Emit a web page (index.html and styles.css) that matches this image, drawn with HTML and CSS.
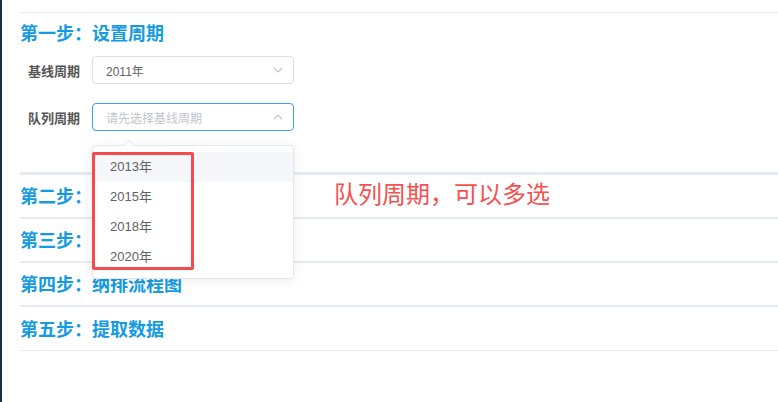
FILE: index.html
```html
<!DOCTYPE html>
<html>
<head>
    <meta charset="UTF-8">
    <meta name="viewport" content="width=device-width, initial-scale=1.0">
    <title>数据提取</title>
    <link rel="stylesheet" href="styles.css">
</head>
<body>
    <div class="page">
        <div class="edge"></div>
        <div class="main">

            <div class="step step-first">
                <h3 class="step-title">第一步：设置周期</h3>

                <div class="form-row">
                    <label class="form-label">基线周期</label>
                    <div class="select">
                        <span class="select-value">2011年</span>
                        <svg class="arrow" width="10" height="6" viewBox="0 0 10 6"><path d="M1 1l4 4 4-4" fill="none" stroke="#c0c4cc" stroke-width="1.2"/></svg>
                    </div>
                </div>

                <div class="form-row">
                    <label class="form-label">队列周期</label>
                    <div class="select select-open">
                        <span class="select-placeholder">请先选择基线周期</span>
                        <svg class="arrow" width="10" height="6" viewBox="0 0 10 6"><path d="M1 5l4-4 4 4" fill="none" stroke="#c0c4cc" stroke-width="1.2"/></svg>

                        <!-- dropdown of the open select -->
                        <div class="dropdown">
                            <div class="dropdown-arrow"></div>
                            <ul class="dropdown-list">
                                <li class="hover">2013年</li>
                                <li>2015年</li>
                                <li>2018年</li>
                                <li>2020年</li>
                            </ul>
                            <div class="mark"></div>
                        </div>
                    </div>
                </div>

                <div class="note">队列周期，可以多选</div>
            </div>

            <div class="step step-mid">
                <h3 class="step-title">第二步：</h3>
            </div>
            <div class="step step-mid">
                <h3 class="step-title">第三步：</h3>
            </div>
            <div class="step step-mid">
                <h3 class="step-title">第四步：纳排流程图</h3>
            </div>
            <div class="step step-last">
                <h3 class="step-title">第五步：提取数据</h3>
            </div>

        </div>
    </div>
</body>
</html>
```

FILE: styles.css
```css
body {
    margin: 0;
    padding: 0;
    font-family: "Liberation Sans", "Noto Sans CJK SC", sans-serif;
    background: #fff;
    color: #606266;
}

.page {
    display: flex;
    height: 402px;
    overflow: hidden;
}

.edge {
    width: 2px;
    background-color: #1f2d3d;
}

.main {
    flex: 1;
    padding: 12px 0 0 18px;
}

.step {
    border-bottom: 2px solid #e6eaf4;
}

.step-first {
    position: relative;
    border-top: 1px solid #e6eaf4;
    border-bottom-width: 3px;
    height: 159px;
}

.step-mid,
.step-last {
    height: 42px;
    display: flex;
    align-items: center;
}

.step-last {
    border-bottom-width: 1px;
    height: 43px;
}

.step-title {
    margin: 0 0 2px 0;
    font-size: 18px;
    line-height: 22px;
    font-weight: bold;
    color: #149be3;
    font-family: "Noto Sans CJK SC", sans-serif;
}

.step-first .step-title {
    margin-top: 8px;
    margin-bottom: 13px;
}

.form-row {
    display: flex;
    align-items: center;
    margin-bottom: 19px;
}

.form-label {
    width: 60px;
    padding-right: 12px;
    text-align: right;
    font-size: 13px;
    font-weight: bold;
    color: #555;
    font-family: "Noto Sans CJK SC", sans-serif;
}

.select {
    position: relative;
    box-sizing: border-box;
    width: 202px;
    height: 28px;
    border: 1px solid #dcdfe6;
    border-radius: 4px;
    display: flex;
    align-items: center;
    justify-content: space-between;
    padding: 0 10px 0 13px;
    font-size: 12px;
}

.select-open {
    border-color: #409eff;
}

.select-value {
    color: #606266;
}

.select-placeholder {
    color: #c0c4cc;
    font-family: "Noto Sans CJK SC", sans-serif;
}

.dropdown {
    position: absolute;
    left: -1px;
    top: 41px;
    width: 202px;
    box-sizing: border-box;
    border: 1px solid #e4e7ed;
    border-radius: 4px;
    background: #fff;
    box-shadow: 0 2px 12px rgba(0, 0, 0, 0.08);
    padding: 6px 0;
    z-index: 5;
}

.dropdown-arrow {
    position: absolute;
    top: -6px;
    left: 30px;
    width: 0;
    height: 0;
    border-left: 6px solid transparent;
    border-right: 6px solid transparent;
    border-bottom: 6px solid #e4e7ed;
}

.dropdown-arrow::after {
    content: "";
    position: absolute;
    top: 1px;
    left: -5px;
    border-left: 5px solid transparent;
    border-right: 5px solid transparent;
    border-bottom: 5px solid #fff;
}

.dropdown-list {
    list-style: none;
    margin: 0;
    padding: 0;
}

.dropdown-list li {
    height: 30px;
    line-height: 30px;
    padding-left: 17px;
    font-size: 13px;
    color: #606266;
}

.dropdown-list li.hover {
    background-color: #f5f7fa;
}

.mark {
    position: absolute;
    left: -1px;
    top: 6px;
    width: 102px;
    height: 118px;
    box-sizing: border-box;
    border: 3px solid #f44c4c;
    border-radius: 2px;
}

.note {
    position: absolute;
    left: 314px;
    top: 163px;
    font-size: 24px;
    line-height: 34px;
    color: #f5504f;
    font-family: "Noto Sans CJK SC", sans-serif;
    z-index: 6;
}
```
